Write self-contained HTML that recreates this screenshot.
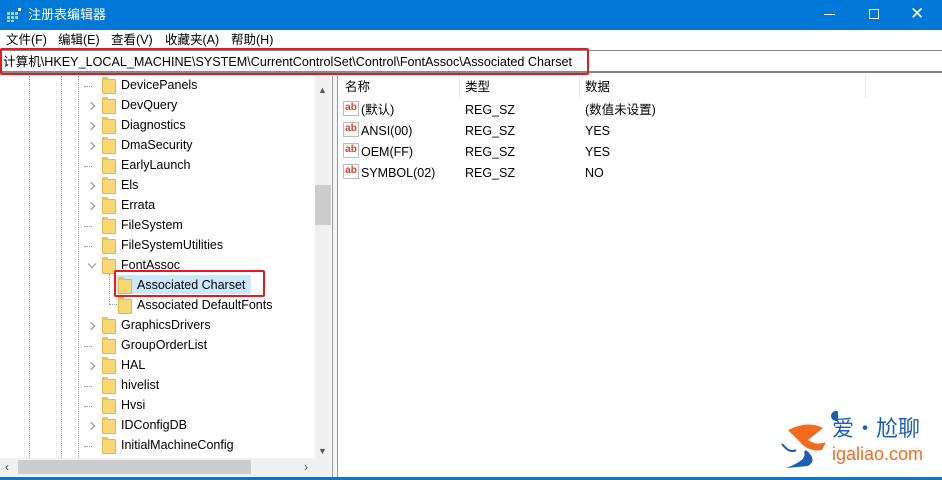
<!DOCTYPE html><html><head><meta charset="utf-8"><style>
*{margin:0;padding:0;box-sizing:border-box}
body{width:942px;height:480px;overflow:hidden;background:#fff;font-family:"Liberation Sans","Noto Sans CJK SC",sans-serif;font-size:12.5px;line-height:16px;color:#000;position:relative}
.a{position:absolute;white-space:nowrap}
.fold{position:absolute;width:14px;height:15px;background:#f8d775;border:1px solid #e0b84a;border-radius:1px}
.fold:before{content:"";position:absolute;left:-1px;top:-3px;width:6px;height:3px;background:#e8c25a}
.chev{position:absolute;width:6px;height:6px;border-right:1.3px solid #888;border-bottom:1.3px solid #888;transform:rotate(-45deg)}
.ab{position:absolute;width:16px;height:15px;border:1px solid #bbb;background:#fff;color:#d9422b;font-weight:bold;font-size:10px;line-height:12px;text-align:center}
.dv{position:absolute;border-left:1px dotted #999;width:0}
.dh{position:absolute;border-top:1px dotted #999;height:0;width:8px}
</style></head><body>
<div class="a" style="left:0;top:0;width:942px;height:30px;background:#0078d7"></div>
<svg class="a" style="left:7px;top:8px" width="14" height="14"><g fill="#9fd0f0"><rect x="0" y="4" width="3" height="3"/><rect x="4" y="4" width="3" height="3"/><rect x="8" y="4" width="3" height="3"/><rect x="0" y="8" width="3" height="3"/><rect x="4" y="8" width="3" height="3"/><rect x="8" y="8" width="3" height="3"/><rect x="0" y="12" width="3" height="2"/><rect x="4" y="12" width="3" height="2"/></g><rect x="11" y="0" width="3" height="3" fill="#fff"/></svg>
<div class="a" style="left:28px;top:7px;color:#fff;font-size:13px">注册表编辑器</div>
<div class="a" style="left:824px;top:14px;width:11px;height:1px;background:#fff"></div>
<div class="a" style="left:869px;top:9px;width:10px;height:10px;border:1px solid #fff"></div>
<div class="a" style="left:910px;top:6px;color:#fff;font-size:17px">✕</div>
<div class="a" style="left:6px;top:32px">文件(F)</div>
<div class="a" style="left:58px;top:32px">编辑(E)</div>
<div class="a" style="left:111px;top:32px">查看(V)</div>
<div class="a" style="left:165px;top:32px">收藏夹(A)</div>
<div class="a" style="left:231px;top:32px">帮助(H)</div>
<div class="a" style="left:0;top:50px;width:942px;height:23px;border-top:1px solid #888;border-bottom:2px solid #888"></div>
<div class="a" style="left:0;top:48px;width:589px;height:27px;border:2px solid #e8191e;border-radius:2px"></div>
<div class="a" style="left:3px;top:54px;font-size:12.6px">计算机\HKEY_LOCAL_MACHINE\SYSTEM\CurrentControlSet\Control\FontAssoc\Associated Charset</div>
<div class="dv" style="left:29px;top:76px;height:382px"></div>
<div class="dv" style="left:61px;top:76px;height:382px"></div>
<div class="dv" style="left:78px;top:76px;height:382px"></div>
<div class="dv" style="left:109px;top:274px;height:30px"></div>
<div class="dh" style="left:109px;top:304px"></div>
<div id="tree"></div>
<div class="a" style="left:114px;top:275px;width:137px;height:19px;background:#cce8ff"></div>
<div class="a" style="left:114px;top:270px;width:151px;height:27px;border:2px solid #e8191e;border-radius:2px"></div>
<div class="fold" style="left:118px;top:279px"></div><div class="a" style="left:137px;top:277px">Associated Charset</div>
<div class="fold" style="left:118px;top:299px"></div><div class="a" style="left:137px;top:297px">Associated DefaultFonts</div>
<div class="a" style="left:315px;top:76px;width:16px;height:382px;background:#f0f0f0"></div>
<div class="a" style="left:315px;top:185px;width:16px;height:40px;background:#cdcdcd"></div>
<div class="a" style="left:318px;top:82px;font-size:9px;color:#555">▲</div>
<div class="a" style="left:318px;top:443px;font-size:9px;color:#555">▼</div>
<div class="a" style="left:0;top:458px;width:331px;height:18px;background:#f0f0f0"></div>
<div class="a" style="left:18px;top:460px;width:233px;height:14px;background:#cdcdcd"></div>
<div class="a" style="left:5px;top:459px;color:#555;font-size:12px">‹</div>
<div class="a" style="left:304px;top:459px;color:#555;font-size:12px">›</div>
<div class="a" style="left:332px;top:76px;width:6px;height:402px;border-left:1px solid #999;border-right:1px solid #999;background:#f4f4f4"></div>
<div class="a" style="left:345px;top:79px">名称</div><div class="a" style="left:465px;top:79px">类型</div><div class="a" style="left:585px;top:79px">数据</div>
<div class="a" style="left:459px;top:76px;width:1px;height:22px;background:#e5e5e5"></div>
<div class="a" style="left:579px;top:76px;width:1px;height:22px;background:#e5e5e5"></div>
<div class="a" style="left:865px;top:76px;width:1px;height:22px;background:#e5e5e5"></div>
<div class="ab" style="left:343px;top:101px">ab</div><div class="a" style="left:361px;top:102px">(默认)</div><div class="a" style="left:465px;top:102px">REG_SZ</div><div class="a" style="left:585px;top:102px">(数值未设置)</div>
<div class="ab" style="left:343px;top:122px">ab</div><div class="a" style="left:361px;top:123px">ANSI(00)</div><div class="a" style="left:465px;top:123px">REG_SZ</div><div class="a" style="left:585px;top:123px">YES</div>
<div class="ab" style="left:343px;top:143px">ab</div><div class="a" style="left:361px;top:144px">OEM(FF)</div><div class="a" style="left:465px;top:144px">REG_SZ</div><div class="a" style="left:585px;top:144px">YES</div>
<div class="ab" style="left:343px;top:164px">ab</div><div class="a" style="left:361px;top:165px">SYMBOL(02)</div><div class="a" style="left:465px;top:165px">REG_SZ</div><div class="a" style="left:585px;top:165px">NO</div>
<svg class="a" style="left:778px;top:410px" width="60" height="60"><path d="M10 20 Q30 10 45 18 L30 30 Q38 36 48 32 L44 40 Q30 42 22 32 Z" fill="#f26b1d"/><circle cx="58" cy="6" r="5" fill="#1a5fb4"/><path d="M28 40 Q40 50 30 56 L8 58 Q30 50 26 42Z" fill="#1a5fb4"/><path d="M4 34 Q12 44 18 40" stroke="#1a5fb4" fill="none" stroke-width="2"/></svg>
<div class="a" style="left:832px;top:414px;font-size:22px;line-height:26px;color:#1a5fb4;font-family:'Noto Sans CJK SC',sans-serif">爱·尬聊</div>
<div class="a" style="left:832px;top:443px;font-size:18px;line-height:22px;color:#f26b1d">igaliao.com</div>
<div class="a" style="left:0;top:477px;width:942px;height:3px;background:#0078d7"></div>
<script>
var items=[["DevicePanels",0],["DevQuery",1],["Diagnostics",1],["DmaSecurity",1],["EarlyLaunch",0],["Els",1],["Errata",1],["FileSystem",0],["FileSystemUtilities",0],["FontAssoc",2],null,null,["GraphicsDrivers",1],["GroupOrderList",0],["HAL",1],["hivelist",0],["Hvsi",0],["IDConfigDB",1],["InitialMachineConfig",0]];
var h="";items.forEach(function(it,i){if(!it)return;var y=76+i*20;
h+='<div class="fold" style="left:102px;top:'+(y+3)+'px"></div><div class="a" style="left:121px;top:'+(y+1)+'px">'+it[0]+'</div>';
if(it[1]==1)h+='<div class="chev" style="left:88px;top:'+(y+7)+'px"></div>';
else if(it[1]==2)h+='<div class="chev" style="left:89px;top:'+(y+5)+'px;transform:rotate(45deg)"></div>';
else h+='<div class="dh" style="left:84px;top:'+(y+10)+'px"></div>';});
document.getElementById("tree").innerHTML=h;
</script>
</body></html>
